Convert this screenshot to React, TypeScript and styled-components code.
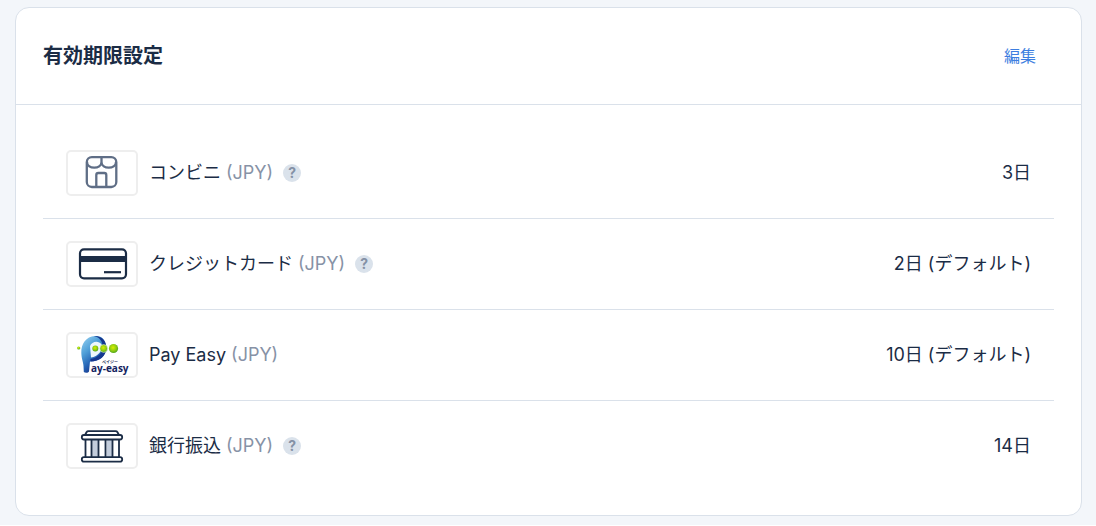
import React from "react";
import styled, { createGlobalStyle } from "styled-components";

const ink = "#1b2c45";
const line = "#dae1ea";

const GlobalStyle = createGlobalStyle`
  *, *::before, *::after { box-sizing: border-box; }
  body {
    margin: 0;
    background: #ffffff;
    color: ${ink};
    font-family: Inter, "Noto Sans CJK JP", sans-serif;
    font-size: 18px;
    line-height: 24px;
  }
`;

const Page = styled.main`
  padding: 7px 14px 9px 15px;
  background: #f3f6fa;
`;

const Card = styled.section`
  background: #ffffff;
  border: 1px solid ${line};
  border-radius: 14px;
`;

const CardHeader = styled.header`
  display: flex;
  align-items: center;
  justify-content: space-between;
  padding: 36px 45px 36px 27px;
  border-bottom: 1px solid ${line};
`;

const Title = styled.h2`
  margin: 0;
  font-size: 20px;
  font-weight: 700;
  line-height: 24px;
`;

const EditLink = styled.a`
  color: #3d7ee0;
  font-size: 16px;
  line-height: 22px;
  text-decoration: none;
`;

const List = styled.ul`
  list-style: none;
  margin: 0;
  padding: 23px 27px 24px;
`;

const Row = styled.li`
  display: flex;
  align-items: center;
  padding: 22px 23px;

  & + & {
    border-top: 1px solid ${line};
  }
`;

const Tile = styled.span`
  display: flex;
  flex: none;
  width: 72px;
  height: 46px;
  margin-right: 11px;
  border: 2px solid #eeeeee;
  border-radius: 5px;

  svg {
    display: block;
    margin: -2px;
    flex: none;
  }
`;

const Currency = styled.span`
  margin-left: 5px;
  color: #8792a6;
`;

const HelpButton = styled.button`
  display: flex;
  align-items: center;
  justify-content: center;
  width: 18px;
  height: 18px;
  margin-left: 10px;
  padding: 0;
  border: 0;
  border-radius: 50%;
  background: #dae2eb;
  color: #8491a5;
  font: 700 14px/18px Inter, sans-serif;
  cursor: pointer;
`;

const Value = styled.span`
  margin-left: auto;
`;

const StoreIcon = () => (
  <svg width="72" height="46" viewBox="0 0 72 46" fill="none" stroke="#5f6e86" strokeWidth="2.300" aria-hidden="true">
    <rect x="20.800" y="7.200" width="29.500" height="29.800" rx="5" />
    <path d="M35.500 7.500v4.500M21 12c0 7.500 14.500 7.500 14.500 0M35.500 12c0 7.500 14.500 7.500 14.500 0" />
    <path d="M30.300 37V25q0-2 2-2h6q2 0 2 2v12" />
  </svg>
);

const CreditCardIcon = () => (
  <svg width="72" height="46" viewBox="0 0 72 46" fill="none" stroke={ink} strokeWidth="2.200" aria-hidden="true">
    <rect x="14" y="8.300" width="46" height="29" rx="4" />
    <path d="M13 18h48" strokeWidth="6" />
    <path d="M38 31.200h17" />
  </svg>
);

const PayEasyLogo = () => (
  <svg width="72" height="46" viewBox="0 0 72 46" aria-hidden="true">
    <defs>
      <linearGradient id="pe-blue" x1="0" y1="0" x2=".6" y2="1">
        <stop offset="0" stopColor="#9ad4f2" />
        <stop offset=".4" stopColor="#4f9fd8" />
        <stop offset=".7" stopColor="#2462b4" />
        <stop offset="1" stopColor="#15257a" />
      </linearGradient>
      <radialGradient id="pe-green" cx=".45" cy=".4" r=".6">
        <stop offset="0" stopColor="#d8f000" />
        <stop offset=".6" stopColor="#8fcb12" />
        <stop offset="1" stopColor="#50a51c" />
      </radialGradient>
    </defs>
    <path
      d="M29 4C20 4.500 15 12 15.300 21c.2 6 2 9 2.200 13l.300 6c1.500 1.300 4.500 1 5.200-.5l1-10c9 0 16-5 16-13.500C40 8 36 3.500 29 4Z"
      fill="url(#pe-blue)"
    />
    <path d="M24 14c1.500-5 9-6 11.500-1.500 1.500 6-3.500 12-10.500 13Z" fill="#eef7fc" />
    <path d="M28 4c8-.500 12.500 5 12.300 12C40 24 34 29.500 24.500 29.500v-2.500c7-1 11.500-5.500 12-11C37 9.500 34 5.500 28 4Z" fill="#16388f" />
    <circle cx="12.700" cy="16" r="1.600" fill="url(#pe-green)" />
    <circle cx="29.300" cy="16.500" r="3" fill="url(#pe-green)" />
    <circle cx="37.700" cy="16.500" r="3.900" fill="url(#pe-green)" stroke="#fff" strokeWidth=".5" />
    <circle cx="47.500" cy="16.500" r="4.600" fill="url(#pe-green)" />
    <text x="36" y="32" fontSize="4" fontWeight="700" fontFamily='"Noto Sans CJK JP", sans-serif' fill="#222d55">ペイジー</text>
    <text x="25" y="40" fontSize="10" fontWeight="700" fontFamily='"Open Sans", sans-serif' fill="#14245f">ay-easy</text>
  </svg>
);

const BankIcon = () => (
  <svg width="72" height="46" viewBox="0 0 72 46" fill="none" stroke={ink} strokeWidth="1.800" aria-hidden="true">
    <path d="M26 16h6.500v18H26zM40.500 16H47v18h-6.500z" fill="#c3cddc" stroke="none" />
    <path d="M19.500 16v18M25.500 16v18M32.500 16v18M39.500 16v18M46.500 16v18M53 16v18" />
    <path d="M19 12l1.500-2.800q.6-1 2-1h27q1.400 0 2 1l1.500 2.800" />
    <rect x="15.800" y="12" width="40.400" height="4.500" rx="2.200" fill="#fff" />
    <rect x="15.800" y="34.200" width="40.400" height="4.500" rx="2.200" fill="#fff" />
  </svg>
);

type Method = { name: string; value: string; help: boolean; Icon: () => React.JSX.Element };

const methods: Method[] = [
  { name: "コンビニ", value: "3日", help: true, Icon: StoreIcon },
  { name: "クレジットカード", value: "2日 (デフォルト)", help: true, Icon: CreditCardIcon },
  { name: "Pay Easy", value: "10日 (デフォルト)", help: false, Icon: PayEasyLogo },
  { name: "銀行振込", value: "14日", help: true, Icon: BankIcon },
];

export default function App() {
  return (
    <>
      <GlobalStyle />
      <Page lang="ja">
        <Card>
          <CardHeader>
            <Title>有効期限設定</Title>
            <EditLink href="#edit">編集</EditLink>
          </CardHeader>
          <List>
            {methods.map(({ name, value, help, Icon }) => (
              <Row key={name}>
                <Tile>
                  <Icon />
                </Tile>
                <span>{name}</span>
                <Currency>(JPY)</Currency>
                {help && <HelpButton type="button" aria-label={`${name}について`}>?</HelpButton>}
                <Value>{value}</Value>
              </Row>
            ))}
          </List>
        </Card>
      </Page>
    </>
  );
}
